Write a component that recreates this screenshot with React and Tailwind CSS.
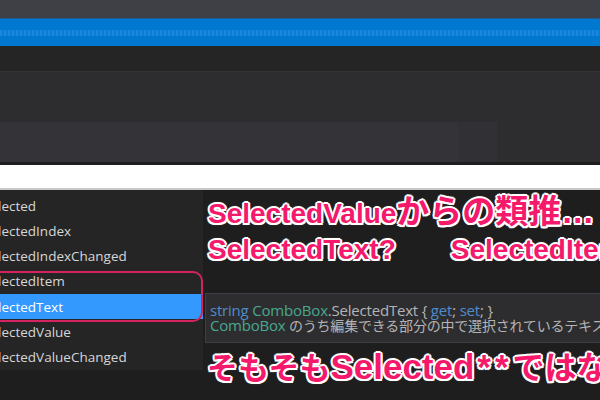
import React from "react";

const rows = [
  "Selected",
  "SelectedIndex",
  "SelectedIndexChanged",
  "SelectedItem",
  "SelectedText",
  "SelectedValue",
  "SelectedValueChanged",
];

const outline =
  "[text-shadow:2px_0_0_#fff,-2px_0_0_#fff,0_2px_0_#fff,0_-2px_0_#fff,1.5px_1.5px_0_#fff,-1.5px_-1.5px_0_#fff,1.5px_-1.5px_0_#fff,-1.5px_1.5px_0_#fff,0_0_3px_#fff]";

export default function App() {
  return (
    <div className="relative w-[600px] h-[400px] overflow-hidden bg-[#1e1e1e] flex flex-col font-['Open_Sans','Noto_Sans_CJK_JP',sans-serif]">
      <div className="h-[18px] bg-[#3f3f46]" />
      <div className="h-[28px] bg-[#0078d0] border-t border-[#1c5a92] flex flex-col justify-center">
        <div className="h-[6px] bg-[repeating-linear-gradient(90deg,#1a88dd_0px,#1a88dd_2px,#0a7cd3_2px,#0a7cd3_4px)]" />
      </div>
      <div className="h-[25px] bg-[#252526]" />
      <div className="h-[1px] bg-[#333335]" />
      <div className="h-[50px] bg-[#2d2d30]" />
      <div className="h-[40px] flex bg-[#2d2d30]">
        <div className="w-[458px] bg-[#343438]" />
        <div className="w-[39px] bg-[#313135]" />
      </div>
      <div className="h-[3px] bg-[#1e1e1e]" />
      <div className="h-[23px] bg-white" />
      <div className="h-[2px] bg-[#c8c8c8]" />
      <div className="flex-1 flex">
        <div className="w-[203px] h-[180px] bg-[#252526] pt-[3px] overflow-hidden">
          {rows.map((r, i) => (
            <div
              key={r}
              className={`h-[25.3px] flex items-center text-[13.5px] whitespace-nowrap ${
                i === 4 ? "bg-[#3399ff] text-white" : "text-[#d6d6d6]"
              }`}
            >
              <span className="ml-[-17px]">{r}</span>
            </div>
          ))}
        </div>
      </div>

      {/* pink highlight box */}
      <div className="absolute left-[-20px] top-[271px] w-[223px] h-[51px] rounded-[10px] border-[2.5px] border-[#d4235f]" />

      {/* tooltip */}
      <div className="absolute left-[205px] top-[293px] w-[420px] h-[50px] bg-[#2d2d30] border border-[#3f3f46] pl-[4px] pt-[9px] text-[15px] leading-[15px] whitespace-nowrap tracking-[-0.2px]">
        <div>
          <span className="text-[#4e8ccc]">string</span>{" "}
          <span className="text-[#48a88e]">ComboBox</span>
          <span className="text-[#b4b4b4]">.SelectedText {"{"} </span>
          <span className="text-[#4e8ccc]">get</span>
          <span className="text-[#b4b4b4]">; </span>
          <span className="text-[#4e8ccc]">set</span>
          <span className="text-[#b4b4b4]">; {"}"}</span>
        </div>
        <div>
          <span className="text-[#48a88e]">ComboBox</span>
          <span className="text-[#b4b4b4] text-[14px]"> のうち編集できる部分の中で選択されているテキストを取得または設定します。</span>
        </div>
      </div>

      {/* annotations */}
      <div
        className={`absolute left-[208px] top-[194px] whitespace-nowrap text-[28px] leading-[36px] font-bold text-[#f5196b] font-['Liberation_Sans','Noto_Sans_CJK_JP',sans-serif] ${outline}`}
      >
        <div>
          SelectedValue<span className="text-[33px]">からの類推…</span>
        </div>
        <div>
          SelectedText?<span className="inline-block w-[55px]" />SelectedItem?
        </div>
      </div>
      <div
        className={`absolute left-[207px] top-[347px] whitespace-nowrap text-[31px] leading-[40px] font-bold text-[#f5196b] font-['Liberation_Sans','Noto_Sans_CJK_JP',sans-serif] ${outline}`}
      >
        そもそも<span className="text-[35px]">Selected</span>
        <span className="text-[35px] tracking-[4px] ml-[3px]">**</span>
        <span className="text-[32px]">ではない</span>
      </div>
    </div>
  );
}
